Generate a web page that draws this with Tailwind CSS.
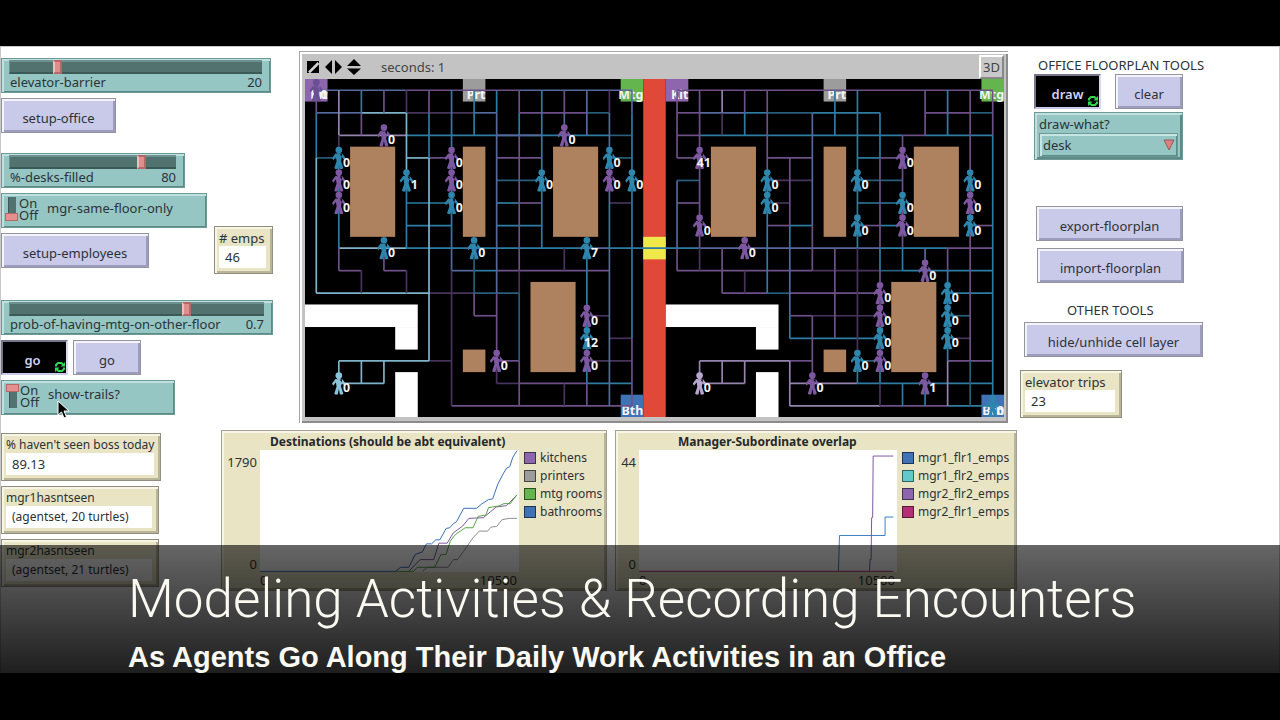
<!DOCTYPE html>
<html lang="en">
<head>
<meta charset="utf-8">
<title>Office encounters model</title>
<script src="https://cdn.jsdelivr.net/npm/@tailwindcss/browser@4"></script>
</head>
<body class="bg-black">
<svg class="hidden" aria-hidden="true">
  <symbol id="person" viewBox="0 0 300 300">
    <circle cx="150" cy="45" r="44"/>
    <path d="M105 90 120 195 90 285 105 300H135L150 225 165 300H195L210 285 180 195 195 90ZM127 75H173V95H127ZM195 90 240 150 225 180 165 105ZM105 90 60 150 75 180 135 105Z"/>
  </symbol>
  <symbol id="forever" viewBox="0 0 10 10">
    <path d="M1 4.500V3L3 1H6.500L8 2.500M9 5.500V7L7 9H3.500L2 7.500" fill="none" stroke="#2fd851" stroke-width="2"/>
    <path d="M10 0V4.500H5.500ZM0 10V5.500H4.500Z"/>
  </symbol>
</svg>
<div class="flex min-h-screen flex-col pt-[46px] font-['Noto_Sans','Open_Sans',sans-serif] text-[13px] leading-4 text-[#2c3338]">
<main class="relative flex-1 border-x border-t border-[#c8c8c8] bg-white">

  <div class="flex items-start">
    <!-- setup controls -->
    <section class="w-[298px] shrink-0 pt-[11px]">
      <div class="h-[35px] w-[270px] border border-[#6b9a97] bg-[#95c6c3] pl-[7px] pr-2 pt-px shadow-[inset_2px_2px_0_#bfe0de,inset_-1px_-1px_0_#5d8a87]">
        <input id="barrier" type="range" min="0" max="114" value="20" class="block h-[14px] w-full appearance-none border-y-2 border-l border-[#6d918e] border-b-[#3a5957] bg-[#527270] [&::-webkit-slider-thumb]:h-[14px] [&::-webkit-slider-thumb]:w-[9px] [&::-webkit-slider-thumb]:appearance-none [&::-webkit-slider-thumb]:border-2 [&::-webkit-slider-thumb]:border-[#b56868] [&::-webkit-slider-thumb]:border-l-[#f0bcbc] [&::-webkit-slider-thumb]:bg-[#e08d8d]">
        <div class="flex justify-between pl-px"><label for="barrier">elevator-barrier</label><output for="barrier">20</output></div>
      </div>
      <button class="mt-[5px] block h-[35px] w-[115px] border border-[#9494a0] bg-[#c9c9ea] pt-1 shadow-[inset_2px_2px_0_#f4f4ff,inset_-2px_-2px_0_#9c9cbd]">setup-office</button>
      <div class="mt-5 h-[35px] w-[184px] border border-[#6b9a97] bg-[#95c6c3] pl-[7px] pr-2 pt-px shadow-[inset_2px_2px_0_#bfe0de,inset_-1px_-1px_0_#5d8a87]">
        <input id="desks" type="range" min="0" max="99" value="80" class="block h-[14px] w-full appearance-none border-y-2 border-l border-[#6d918e] border-b-[#3a5957] bg-[#527270] [&::-webkit-slider-thumb]:h-[14px] [&::-webkit-slider-thumb]:w-[9px] [&::-webkit-slider-thumb]:appearance-none [&::-webkit-slider-thumb]:border-2 [&::-webkit-slider-thumb]:border-[#b56868] [&::-webkit-slider-thumb]:border-l-[#f0bcbc] [&::-webkit-slider-thumb]:bg-[#e08d8d]">
        <div class="flex justify-between pl-px"><label for="desks">%-desks-filled</label><output for="desks">80</output></div>
      </div>
      <div class="flex items-end justify-between pr-[26px]">
        <div>
          <label class="mt-[5px] flex h-[35px] w-[206px] gap-[2px] border border-[#6b9a97] bg-[#95c6c3] pl-[3px] pt-[3px] shadow-[inset_2px_2px_0_#bfe0de,inset_-1px_-1px_0_#5d8a87]">
            <input type="checkbox" class="relative ml-[3px] mr-px h-6 w-2 appearance-none border-l border-[#3a5957] bg-[#527270] before:absolute before:-left-[4px] before:bottom-0 before:h-2 before:w-[13px] before:border before:border-[#b56868] before:bg-[#e58f8f] before:content-[''] checked:before:bottom-4">
            <span class="w-[26px] leading-3">On<br>Off</span>
            <span class="pt-[3px]">mgr-same-floor-only</span>
          </label>
          <button class="mt-[5px] block h-[35px] w-[148px] border border-[#9494a0] bg-[#c9c9ea] pt-1 shadow-[inset_2px_2px_0_#f4f4ff,inset_-2px_-2px_0_#9c9cbd]">setup-employees</button>
        </div>
        <div class="-mb-[6px] h-[48px] w-[59px] border border-[#8f8e80] bg-[#e8e4c4] pl-[4px] pr-[6px] pt-[3px] shadow-[inset_2px_2px_0_#f7f5e4,inset_-2px_-2px_0_#b9b598]">
          <div class="whitespace-nowrap"># emps</div>
          <output class="block h-[22px] bg-white pl-[6px] pt-[3px]">46</output>
        </div>
      </div>
      <div class="mt-8 h-[35px] w-[272px] border border-[#6b9a97] bg-[#95c6c3] pl-[7px] pr-2 pt-px shadow-[inset_2px_2px_0_#bfe0de,inset_-1px_-1px_0_#5d8a87]">
        <input id="prob" type="range" min="0" max="1" step="0.1" value="0.7" class="block h-[14px] w-full appearance-none border-y-2 border-l border-[#6d918e] border-b-[#3a5957] bg-[#527270] [&::-webkit-slider-thumb]:h-[14px] [&::-webkit-slider-thumb]:w-[9px] [&::-webkit-slider-thumb]:appearance-none [&::-webkit-slider-thumb]:border-2 [&::-webkit-slider-thumb]:border-[#b56868] [&::-webkit-slider-thumb]:border-l-[#f0bcbc] [&::-webkit-slider-thumb]:bg-[#e08d8d]">
        <div class="flex justify-between pl-px"><label for="prob">prob-of-having-mtg-on-other-floor</label><output for="prob">0.7</output></div>
      </div>
      <div class="mt-[5px] flex gap-[5px]">
        <button class="relative h-[35px] w-[67px] border-2 border-[#77778c] border-b-[#c9c9ea] border-r-[#d8d8ee] bg-black pt-1 pr-1 font-semibold text-[#d3d3f2]">go
          <svg class="absolute bottom-px right-px size-[10px] fill-[#2fd851]"><use href="#forever"/></svg></button>
        <button class="h-[35px] w-[68px] border border-[#9494a0] bg-[#c9c9ea] pt-1 shadow-[inset_2px_2px_0_#f4f4ff,inset_-2px_-2px_0_#9c9cbd]">go</button>
      </div>
      <label class="relative mt-[5px] flex h-[35px] w-[174px] gap-[2px] border border-[#6b9a97] bg-[#95c6c3] pl-[4px] pt-[3px] shadow-[inset_2px_2px_0_#bfe0de,inset_-1px_-1px_0_#5d8a87]">
        <input type="checkbox" checked class="relative ml-[3px] mr-px h-6 w-2 appearance-none border-l border-[#3a5957] bg-[#527270] before:absolute before:-left-[4px] before:bottom-0 before:h-2 before:w-[13px] before:border before:border-[#b56868] before:bg-[#e58f8f] before:content-[''] checked:before:bottom-4">
        <span class="w-[26px] leading-3">On<br>Off</span>
        <span class="pt-[2px]">show-trails?</span>
        <svg class="absolute left-[55px] top-[19px] h-[19px] w-[13px]" viewBox="0 0 13 19"><path d="M1 1V15L4.500 12 7 18 9.500 17 7 11H12Z" fill="#000" stroke="#fff"/></svg>
      </label>
    </section>

    <!-- world view -->
    <section class="mt-1 min-w-0 flex-1 border-l border-t border-[#a5a5a5] pl-[2px] pt-[2px]">
      <div class="border-b-2 border-r-2 border-[#8c8c8c] bg-[#c3c3c3] pb-1 pl-[3px] pr-[2px]">
        <div class="flex h-[25px] items-center pl-[2px] text-[#444]">
          <svg class="h-4 w-[56px]" viewBox="0 0 56 16"><path d="M0 2H12L0 14ZM12 2V14H0Z"/><path d="M2 13.500 11.500 4" stroke="#d2d2d2" stroke-width="2.500"/><path d="M25 1V15L18 8ZM28 1V15L35 8ZM40 7 47 0 54 7ZM40 9.500H54L47 16Z"/></svg>
          <span class="ml-[18px]">seconds: 1</span>
          <button class="ml-auto h-6 w-[25px] border-2 border-[#888] border-l-white border-t-white bg-[#c9c9c9] text-[13px]">3D</button>
        </div>
        <svg id="world" class="block w-full bg-black font-['Noto_Sans','Open_Sans',sans-serif] text-[11px] font-bold" viewBox="0 0 620 300"></svg>
      </div>
    </section>

    <!-- floorplan tools -->
    <section class="w-[271px] shrink-0 pl-[12px] pt-[10px]">
      <h2 class="ml-[18px]">OFFICE FLOORPLAN TOOLS</h2>
      <div class="ml-[14px] mt-px flex gap-[14px]">
        <button class="relative h-[35px] w-[67px] border-2 border-[#77778c] border-b-[#c9c9ea] border-r-[#d8d8ee] bg-black pt-1 font-semibold text-[#d3d3f2]">draw
          <svg class="absolute bottom-px right-px size-[10px] fill-[#2fd851]"><use href="#forever"/></svg></button>
        <button class="h-[35px] w-[68px] border border-[#9494a0] bg-[#c9c9ea] pt-1 shadow-[inset_2px_2px_0_#f4f4ff,inset_-2px_-2px_0_#9c9cbd]">clear</button>
      </div>
      <div class="relative ml-[14px] mt-[3px] h-[48px] w-[149px] border border-[#6b9a97] bg-[#95c6c3] px-[4px] pt-[3px] shadow-[inset_2px_2px_0_#bfe0de,inset_-2px_-2px_0_#5d8a87]">
        <label for="what" class="block">draw-what?</label>
        <select id="what" class="mt-px block h-[24px] w-full appearance-none border border-[#6b9a97] bg-[#95c6c3] pl-[3px] shadow-[inset_2px_2px_0_#c6e6e4,inset_-1px_-1px_0_#5d8a87]"><option>desk</option></select>
        <svg class="pointer-events-none absolute bottom-[8px] right-[7px] h-3 w-3" viewBox="0 0 12 12"><path d="M1 1H11L6 11Z" fill="#e07f7f" stroke="#8a5f5f"/></svg>
      </div>
      <button class="ml-[16px] mt-[46px] block h-[35px] w-[147px] border border-[#9494a0] bg-[#c9c9ea] pt-1 shadow-[inset_2px_2px_0_#f4f4ff,inset_-2px_-2px_0_#9c9cbd]">export-floorplan</button>
      <button class="ml-[17px] mt-[7px] block h-[35px] w-[147px] border border-[#9494a0] bg-[#c9c9ea] pt-1 shadow-[inset_2px_2px_0_#f4f4ff,inset_-2px_-2px_0_#9c9cbd]">import-floorplan</button>
      <h2 class="ml-[47px] mt-[19px]">OTHER TOOLS</h2>
      <button class="ml-[4px] mt-1 block h-[35px] w-[179px] border border-[#9494a0] bg-[#c9c9ea] pt-1 shadow-[inset_2px_2px_0_#f4f4ff,inset_-2px_-2px_0_#9c9cbd]">hide/unhide cell layer</button>
      <div class="mt-[13px] h-[48px] w-[102px] border border-[#8f8e80] bg-[#e8e4c4] pl-[4px] pr-[6px] pt-[3px] shadow-[inset_2px_2px_0_#f7f5e4,inset_-2px_-2px_0_#b9b598]">
        <div>elevator trips</div>
        <output class="block h-[22px] bg-white pl-[6px] pt-[3px]">23</output>
      </div>
    </section>
  </div>

  <div class="mt-[7px] flex items-start">
    <!-- monitors -->
    <section class="flex w-[220px] shrink-0 flex-col gap-[5px] pt-[3px]">
      <div class="h-[48px] w-[160px] border border-[#8f8e80] bg-[#e8e4c4] pl-[4px] pr-[6px] pt-[3px] shadow-[inset_2px_2px_0_#f7f5e4,inset_-2px_-2px_0_#b9b598]">
        <div class="text-xs leading-4 whitespace-nowrap">% haven't seen boss today</div>
        <output class="block h-[22px] bg-white pl-[6px] pt-[3px]">89.13</output>
      </div>
      <div class="h-[48px] w-[158px] border border-[#8f8e80] bg-[#e8e4c4] pl-[4px] pr-[6px] pt-[3px] shadow-[inset_2px_2px_0_#f7f5e4,inset_-2px_-2px_0_#b9b598]">
        <div class="text-xs leading-4">mgr1hasntseen</div>
        <output class="block h-[22px] bg-white pl-[6px] pt-[3px] text-xs leading-4">(agentset, 20 turtles)</output>
      </div>
      <div class="h-[48px] w-[158px] border border-[#8f8e80] bg-[#e8e4c4] pl-[4px] pr-[6px] pt-[3px] shadow-[inset_2px_2px_0_#f7f5e4,inset_-2px_-2px_0_#b9b598]">
        <div class="text-xs leading-4">mgr2hasntseen</div>
        <output class="block h-[22px] bg-white pl-[6px] pt-[3px] text-xs leading-4">(agentset, 21 turtles)</output>
      </div>
    </section>

    <!-- plots -->
    <section class="mr-[262px] grid min-w-0 flex-1 grid-cols-[386fr_402fr] gap-2">
      <figure class="h-[161px] border border-[#a2a193] bg-[#e8e4c4] pt-[3px] shadow-[inset_2px_2px_0_#f7f5e4,inset_-2px_-2px_0_#b9b598]">
        <figcaption class="pl-[48px] text-xs leading-4 font-bold text-[#26282a]">Destinations (should be abt equivalent)</figcaption>
        <div class="flex">
          <div class="flex h-[122px] w-[38px] shrink-0 flex-col justify-between pr-[3px] pt-1 text-right"><span>1790</span><span>0</span></div>
          <div class="min-w-0 flex-1">
            <svg class="block h-[122px] w-full bg-white" viewBox="88 78 501 364" preserveAspectRatio="none" fill="none">
              <g stroke-width="1">
              <path vector-effect="non-scaling-stroke" stroke="#8f8f8f" d="M402 440 412 428H452L462 405H470L482 380 500 340 512 320H528L535 308 546 306 556 286 570 282H585"/>
              <path vector-effect="non-scaling-stroke" stroke="#8159a0" d="M376 440 388 420 398 405H424L434 356H450L462 325 480 305 492 282 520 280 534 262 545 248 565 244 585 212"/>
              <path vector-effect="non-scaling-stroke" stroke="#55a544" d="M350 440H385L392 428H426L438 390H448L456 350 466 330 485 310H500L510 276 525 272 530 250 550 245 560 238H572L585 212"/>
              <path vector-effect="non-scaling-stroke" stroke="#3b6fb8" d="M88 440H350L360 428H376L388 390 402 382 410 358H420L428 346H436L448 312 455 310 462 298 468 292 482 252H507L516 240 530 226 538 224 548 180 558 150 565 132 571 128 577 100 585 80"/>
              </g>
            </svg>
            <div class="flex justify-between pr-[2px]"><span>0</span><span>10500</span></div>
          </div>
          <ul class="flex w-[87px] shrink-0 flex-col gap-[2px] pl-[5px] text-xs leading-4">
            <li class="flex items-center gap-1"><i class="size-3 border border-[#3c3350] bg-[#8d66ad]"></i>kitchens</li>
            <li class="flex items-center gap-1"><i class="size-3 border border-[#444] bg-[#9c9c9c]"></i>printers</li>
            <li class="flex items-center gap-1 whitespace-nowrap"><i class="size-3 border border-[#2c5020] bg-[#65b54f]"></i>mtg rooms</li>
            <li class="flex items-center gap-1"><i class="size-3 border border-[#1d3358] bg-[#3f73b6]"></i>bathrooms</li>
          </ul>
        </div>
      </figure>
      <figure class="h-[161px] border border-[#a2a193] bg-[#e8e4c4] pt-[3px] shadow-[inset_2px_2px_0_#f7f5e4,inset_-2px_-2px_0_#b9b598]">
        <figcaption class="pl-[62px] text-xs leading-4 font-bold text-[#26282a]">Manager-Subordinate overlap</figcaption>
        <div class="flex">
          <div class="flex h-[122px] w-[23px] shrink-0 flex-col justify-between pr-[3px] pt-1 text-right"><span>44</span><span>0</span></div>
          <div class="min-w-0 flex-1">
            <svg class="block h-[122px] w-full bg-white" viewBox="821 78 498 364" preserveAspectRatio="none" fill="none">
              <path vector-effect="non-scaling-stroke" stroke="#3b7fc4" d="M1206 440 1208 333H1296V278H1312"/>
              <path vector-effect="non-scaling-stroke" stroke="#8159a0" d="M1266 440 1267 405H1269L1270 280H1272L1273 96H1312"/>
              <path vector-effect="non-scaling-stroke" stroke="#b02e75" d="M821 440H1312"/>
            </svg>
            <div class="flex justify-between pr-[2px]"><span>0</span><span>10500</span></div>
          </div>
          <ul class="flex w-[119px] shrink-0 flex-col gap-[2px] pl-[5px] text-xs leading-4">
            <li class="flex items-center gap-1"><i class="size-3 border border-[#1d3358] bg-[#3f73b6]"></i>mgr1_flr1_emps</li>
            <li class="flex items-center gap-1"><i class="size-3 border border-[#2d6464] bg-[#62c9cb]"></i>mgr1_flr2_emps</li>
            <li class="flex items-center gap-1"><i class="size-3 border border-[#3c3350] bg-[#8d66ad]"></i>mgr2_flr2_emps</li>
            <li class="flex items-center gap-1"><i class="size-3 border border-[#541a3a] bg-[#b32f78]"></i>mgr2_flr1_emps</li>
          </ul>
        </div>
      </figure>
    </section>
  </div>

  <!-- title banner over the lower part of the model -->
  <div class="absolute -inset-x-px bottom-0 h-32 bg-linear-to-b from-black/60 to-black/88 pl-32 whitespace-nowrap text-[#fbfaf2]">
    <h1 class="pt-[22px] font-['Roboto','Liberation_Sans',sans-serif] text-[53px] leading-[64px] font-light">Modeling Activities &amp; Recording Encounters</h1>
    <p class="pt-[10px] font-['Liberation_Sans',Arial,sans-serif] text-[29px] leading-8 font-bold">As Agents Go Along Their Daily Work Activities in an Office</p>
  </div>
</main>
<footer class="h-[47px] shrink-0"></footer>
</div>

<script>
// World grid: 31 x 15 patches, 20 units each.
const S = 20;
const color = {
  p: '#6e5088', q: '#48335c', b: '#2e7ca3', s: '#56699f', l: '#7db4ca', v: '#9483ae', d: '#275e7c'
};
// [column, row, width, height, fill, label]
const patches = [
  [0,0,1,1,'#8d66ad','Kit'],[7,0,1,1,'#9c9c9c','Prt'],[14,0,1,1,'#65b54f','Mtg'],
  [16,0,1,1,'#8d66ad','Kit'],[23,0,1,1,'#9c9c9c','Prt'],[30,0,1,1,'#65b54f','Mtg'],
  [14,14,1,1,'#3f73b6','Bth'],[30,14,1,1,'#3f73b6','Bth'],
  [15,0,1,15,'#e04838',''],[15,7,1,1,'#f0e848','']
];
for (const [c,r,w,h] of [[2,3,2,4],[7,3,1,4],[11,3,2,4],[10,9,2,4],[7,12,1,1],[18,3,2,4],[23,3,1,4],[27,3,2,4],[26,9,2,4],[23,12,1,1]])
  patches.push([c,r,w,h,'#ae825e','']);
for (const c of [0,16]) patches.push([c,10,5,1,'#fff',''],[c+4,11,1,1,'#fff',''],[c+4,13,1,2,'#fff','']);

// Trails along rows: "row: from-to colour"
const across = {
  0:'0-4s 4-9p 9-14s 16-23p 23-30p',
  1:'0-1s 1-2s 2-4l 4-7q 7-8s 9-12p 12-13d 16-17p 17-19s 19-20b 20-22d 22-25b 27-29p 29-30d',
  2:'1-4v 4-13b 8-10s 13-14d 16-17p 17-26b 26-27p 27-30b',
  3:'0-1d 4-5l 5-6p 8-10p 13-14d 16-17p 20-22p 24-25b 25-26p',
  4:'8-10d 16-17d 20-22q 24-26d',
  5:'4-6b 8-9b 9-10p 13-14q 16-17p 20-21q 24-26b',
  6:'4-6b 8-10b 20-21p 21-22b 24-25p 25-26b 29-30p',
  7:'1-4l 4-12b 12-13s 13-17b 17-25s 25-28b 28-30p',
  8:'1-2p 3-4p 6-7s 7-8b 8-13p 16-22p 22-25q 25-26d 26-30b',
  9:'0-5l 5-7q 7-9d 18-20p 20-21d 21-25p 28-30b',
  10:'7-8p 12-13q 21-22p 22-25q 28-29d',
  11:'13-14q 21-25b 28-29q',
  12:'1-5l 5-6q 8-9p 12-14q 17-19v 19-21v 21-22p 24-25d 28-30p',
  13:'1-3l 8-9q 9-12p 12-14b 17-19v 21-24v 24-30b',
  14:'6-14p 21-25v 25-28p 28-30b'
};
// Trails along columns
const down = {
  0:'0-1p 1-3b 3-9l', 1:'0-2v 2-3q 3-7b 7-8p 12-13l', 2:'0-1b 1-2p 8-9q 12-13l',
  3:'0-1p 7-8p 12-13l', 4:'0-1q 1-4l 4-7b 8-9q', 5:'0-1p 1-3b 3-12l',
  6:'0-7b 7-8s 8-14q', 7:'0-2b 7-9d 9-10p', 8:'0-1b 1-9s 9-12p 12-13q',
  9:'0-1p 1-2b 2-8p 8-9q 9-12d 12-14p', 10:'0-7b', 11:'0-1p 1-2s 7-8q 13-14q',
  12:'0-2s 7-13b 13-14p', 13:'0-1q 1-5s 5-7b 7-14s', 14:'0-1s 1-11b 11-14p',
  16:'0-3p 4-7s 7-8p', 17:'0-7p 7-8q 12-13v', 18:'0-1v 1-2q 7-9p 12-13v',
  19:'0-1p 1-2b 8-9q 12-13v', 20:'0-4p 4-9b', 21:'3-6p 6-7b 7-10s 10-11b 12-14v',
  22:'1-6s 6-8p 10-13p', 23:'0-2b 7-11p', 24:'0-7b 7-12q 12-13b',
  25:'1-3b 3-7p 7-8b 8-12p 12-13b 13-14q', 26:'2-7p 7-8b 13-14b', 27:'0-2p 7-8s 13-14b',
  28:'0-2b 7-8p 8-12b 12-14v', 29:'0-7p 7-12p 12-14d', 30:'0-2p 2-14b'
};
// "column,row,colour,label"
const agents = ('0,0,#6b4f95,0 3,2,P,0 1,3,B,0 1,4,P,0 1,5,P,0 4,4,B,1 6,3,P,0 6,4,P,0 6,5,B,0 11,2,P,0 10,4,B,0 13,3,B,0 13,4,P,0 14,4,B,0 ' +
  '3,7,B,0 7,7,B,0 12,7,B,7 12,10,P,0 12,11,B,12 12,12,P,0 8,12,P,0 1,13,#8dc3d8,0 ' +
  '17,3,P,41 20,4,B,0 20,5,B,0 17,6,P,0 24,4,B,0 24,6,B,0 26,3,P,0 26,5,B,0 26,6,P,0 29,4,B,0 29,5,P,0 29,6,B,0 19,7,P,0 ' +
  '27,8,P,0 25,9,P,0 25,10,P,0 25,11,B,0 25,12,P,0 24,12,B,0 28,9,B,0 28,10,B,0 28,11,B,0 27,13,P,1 22,13,P,0 17,13,#b9a6cf,0 30,14,B,0').split(' ');

let out = '';
const label = (c, r, t) => `<text x="${c*S+S}" y="${r*S+18}" text-anchor="end" fill="#f4f4f4">${t}</text>`;
for (const [c,r,w,h,f,t] of patches) {
  out += `<rect x="${c*S}" y="${r*S}" width="${w*S}" height="${h*S}" fill="${f}"/>`;
  if (t) out += label(c, r, t);
}
const trail = (lines, horizontal) => {
  for (const k in lines) for (const seg of lines[k].split(' ')) {
    const [a, b] = seg.slice(0, -1).split('-').map(n => n*S + S/2);
    const m = k*S + S/2;
    out += `<path d="${horizontal ? `M${a} ${m}H${b}` : `M${m} ${a}V${b}`}" stroke="${color[seg.slice(-1)]}" stroke-width="1.5"/>`;
  }
};
trail(across, true);
trail(down, false);
for (const a of agents) {
  const [c, r, f] = a.split(',');
  const fill = f === 'P' ? '#7d57a0' : f === 'B' ? '#2f86ad' : f;
  out += `<use href="#person" x="${c*S}" y="${r*S}" width="${S}" height="${S}" fill="${fill}"/>`;
}
for (const a of agents) { const [c, r, , t] = a.split(','); out += label(+c, +r, t); }
document.getElementById('world').innerHTML = out;
</script>
</body>
</html>
